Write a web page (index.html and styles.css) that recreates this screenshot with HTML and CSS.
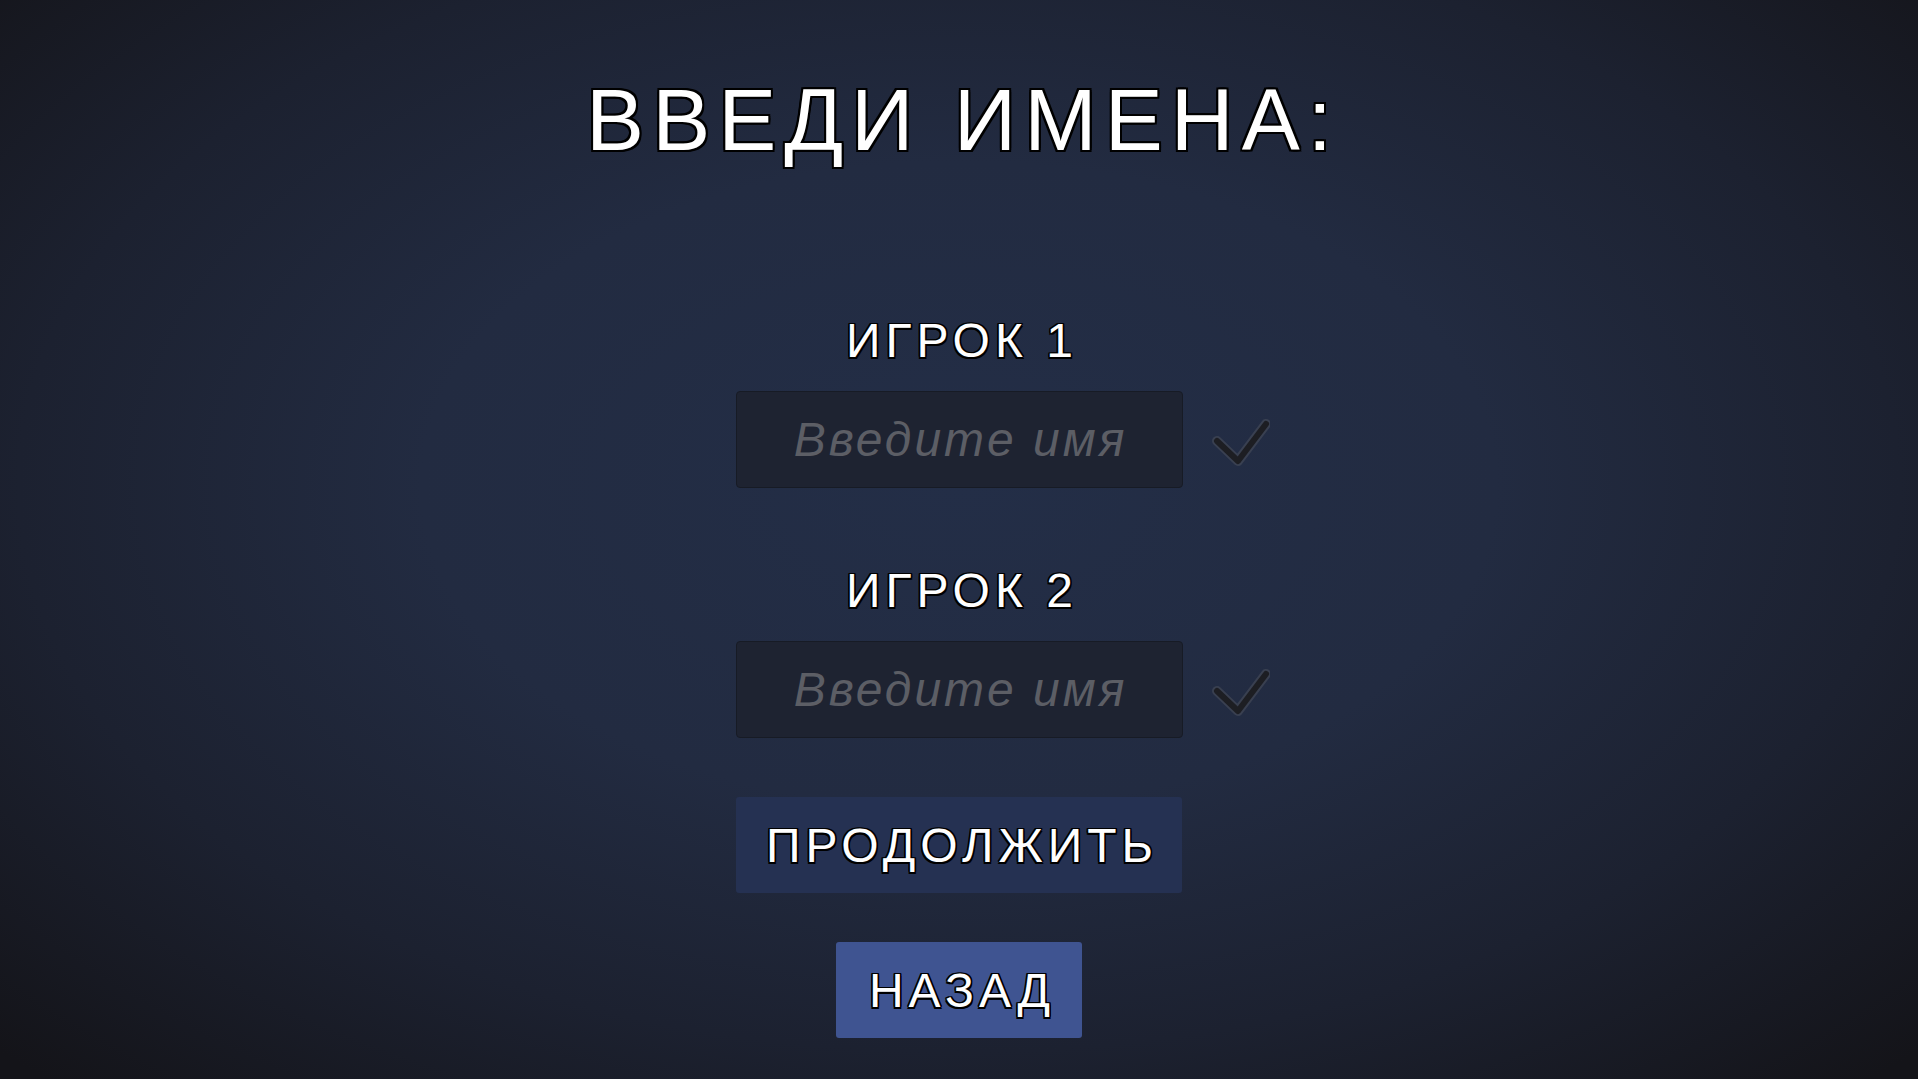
FILE: index.html
```html
<!DOCTYPE html>
<html lang="ru">
<head>
    <meta charset="UTF-8">
    <meta name="viewport" content="width=device-width, initial-scale=1.0">
    <title>Введи имена</title>
    <link rel="stylesheet" href="styles.css">
</head>
<body>

    <!-- Name entry screen -->
    <div class="screen">
        <h1 class="title">ВВЕДИ ИМЕНА:</h1>

        <div class="player player-first">
            <div class="player-label">ИГРОК 1</div>
            <div class="name-row">
                <input class="name-input" type="text" placeholder="Введите имя">
                <svg class="check" width="60" height="56" viewBox="0 0 60 56">
                    <polyline class="check-glow" points="7,28 28,48 56,11"/>
                    <polyline class="check-mark" points="7,28 28,48 56,11"/>
                </svg>
            </div>
        </div>

        <div class="player player-second">
            <div class="player-label">ИГРОК 2</div>
            <div class="name-row">
                <input class="name-input" type="text" placeholder="Введите имя">
                <svg class="check" width="60" height="56" viewBox="0 0 60 56">
                    <polyline class="check-glow" points="7,28 28,48 56,11"/>
                    <polyline class="check-mark" points="7,28 28,48 56,11"/>
                </svg>
            </div>
        </div>

        <button class="btn btn-continue">ПРОДОЛЖИТЬ</button>
        <button class="btn btn-back">НАЗАД</button>
    </div>

</body>
</html>
```

FILE: styles.css
```css
html, body {
    height: 100%;
}

body {
    margin: 0;
    font-family: 'Liberation Sans', Arial, sans-serif;
    color: #fff;
    background: radial-gradient(ellipse 70% 75% at 50% 45%, #232e47 0%, #222b41 40%, #1c2130 70%, #141419 100%);
    overflow: hidden;
}

.screen {
    display: flex;
    flex-direction: column;
    align-items: center;
    padding-top: 76px;
}

/* Outlined white text, like the game UI */
.title {
    margin: 0 0 0 8px;
    font-size: 87px;
    line-height: 87px;
    font-weight: normal;
    letter-spacing: 8px;
    color: #fff;
    text-shadow:
        -2px -2px 0 #000, 2px -2px 0 #000, -2px 2px 0 #000, 2px 2px 0 #000,
        0 -2px 0 #000, 0 2px 0 #000, -2px 0 0 #000, 2px 0 0 #000;
}

.player-label, .btn {
    color: #fff;
    text-shadow:
        -1.5px -1.5px 0 #000, 1.5px -1.5px 0 #000, -1.5px 1.5px 0 #000, 1.5px 1.5px 0 #000,
        0 -1.5px 0 #000, 0 1.5px 0 #000, -1.5px 0 0 #000, 1.5px 0 0 #000;
}

.player-label {
    font-size: 48px;
    line-height: 46px;
    letter-spacing: 5px;
    padding-left: 6px;
}

.player {
    display: flex;
    flex-direction: column;
    align-items: center;
    width: 100%;
}

.player-first {
    margin-top: 155px;
}

.player-second {
    margin-top: 80px;
}

.name-row {
    display: grid;
    grid-template-columns: 1fr 447px 1fr;
    align-items: center;
    width: 100%;
    margin-top: 27px;
}

.name-input {
    grid-column: 2;
    box-sizing: border-box;
    width: 447px;
    height: 97px;
    margin: 0;
    padding: 0 0 0 3px;
    background: #1e2331;
    border: 1px solid #171b25;
    border-radius: 4px;
    font-family: 'Liberation Sans', Arial, sans-serif;
    font-size: 48px;
    font-style: italic;
    letter-spacing: 3px;
    text-align: center;
    color: #c8c8c8;
    outline: none;
}

.name-input::placeholder {
    color: #5c5e65;
}

.check {
    grid-column: 3;
    justify-self: start;
    margin-left: 27px;
    margin-top: 2px;
}

.check-glow {
    fill: none;
    stroke: #434857;
    stroke-opacity: 0.7;
    stroke-width: 10;
    stroke-linecap: round;
    stroke-linejoin: round;
}

.check-mark {
    fill: none;
    stroke: #1d1e23;
    stroke-width: 6;
    stroke-linecap: round;
    stroke-linejoin: round;
}

.btn {
    box-sizing: border-box;
    height: 96px;
    padding: 0 0 0 6px;
    border: none;
    border-radius: 3px;
    font-family: 'Liberation Sans', Arial, sans-serif;
    font-size: 48px;
    letter-spacing: 5px;
    cursor: pointer;
}

.btn-continue {
    width: 446px;
    margin-top: 59px;
    background: #253152;
}

.btn-back {
    width: 246px;
    margin-top: 49px;
    background: #3f5491;
}
```
